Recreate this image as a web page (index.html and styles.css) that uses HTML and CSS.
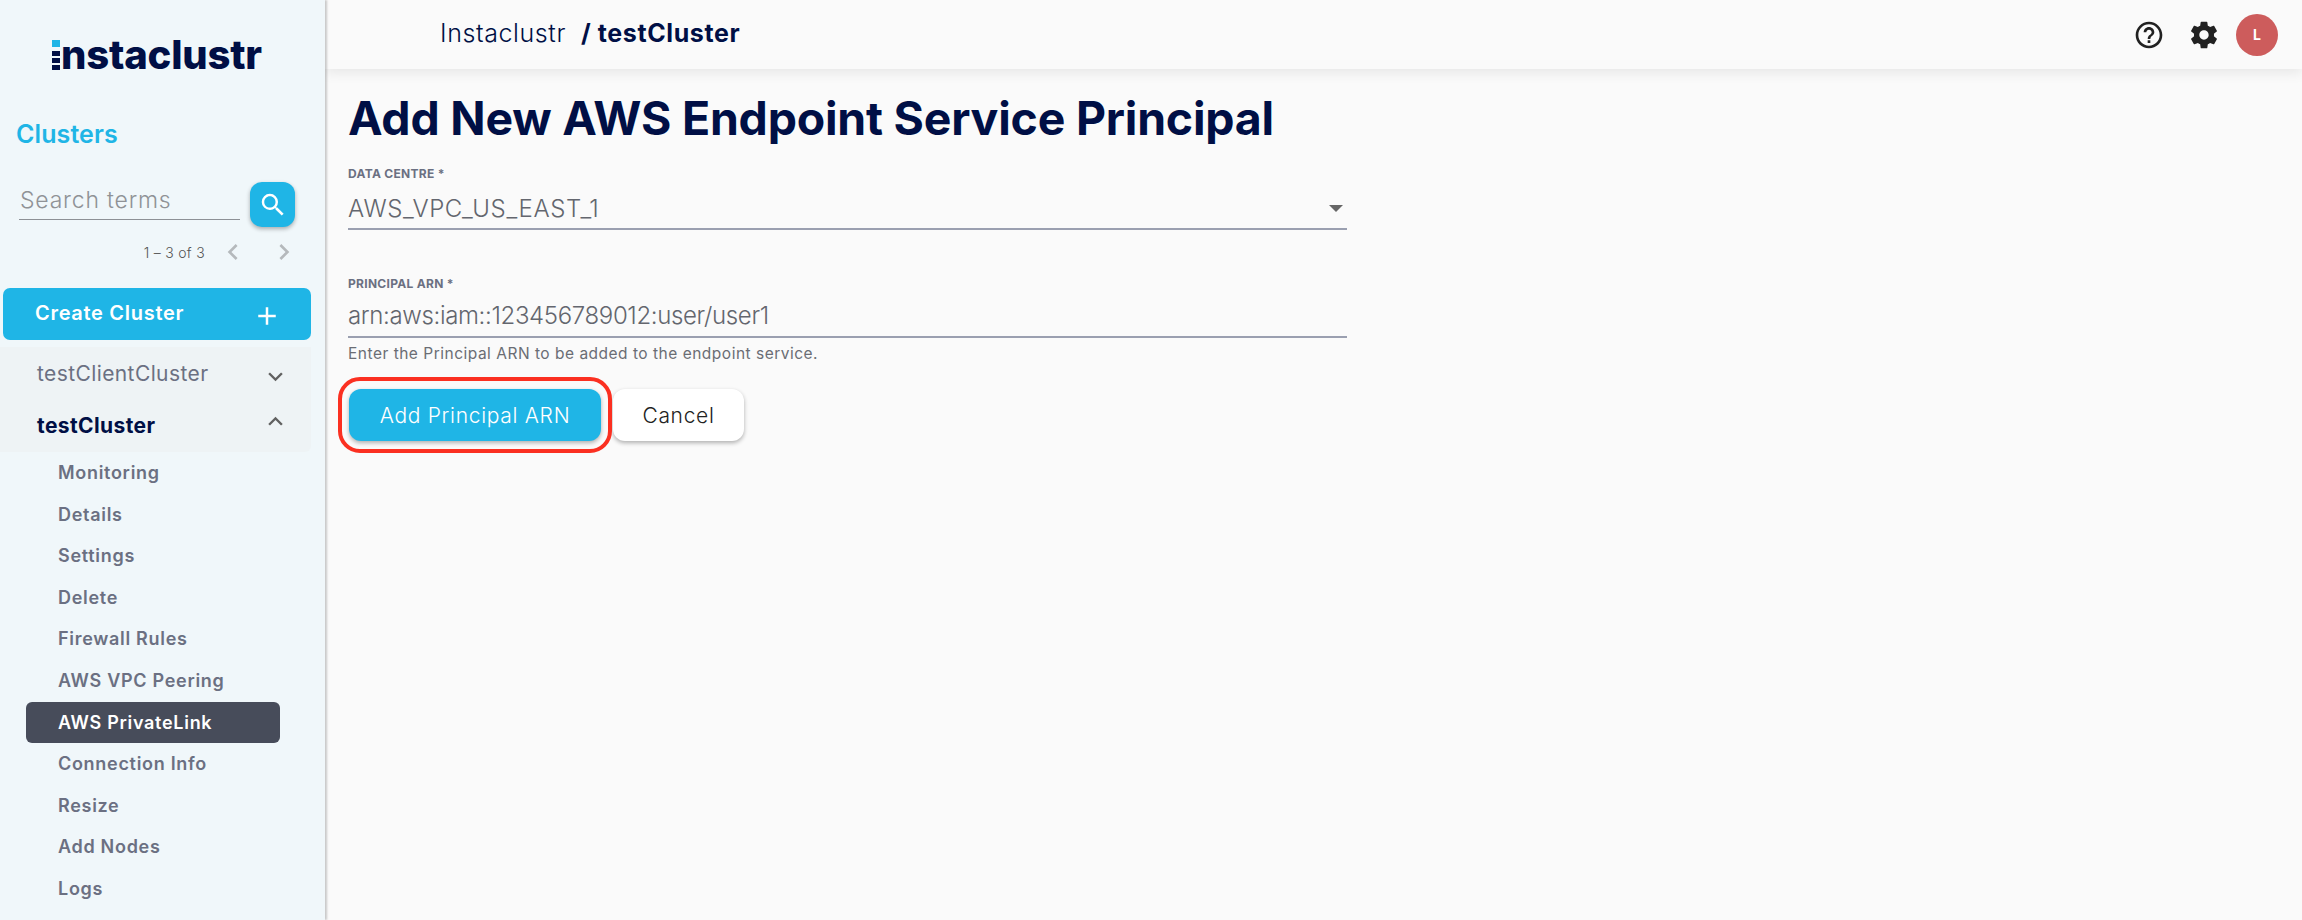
FILE: index.html
```html
<!DOCTYPE html>
<html lang="en">
  <head>
    <meta charset="UTF-8" />
    <title>Add New AWS Endpoint Service Principal</title>
    <link rel="stylesheet" href="styles.css">
  </head>
  <body>
    <div class="sidebar">
      <div class="logo">
        <div class="logo-mark"><span class="blue"></span><span></span><span></span><span></span></div>
        <span class="logo-text">nstaclustr</span>
      </div>
      <h2 class="clusters-title">Clusters</h2>
      <div class="search-row">
        <div class="search-input">Search terms</div>
        <button class="search-btn">
          <svg viewBox="0 0 24 24" width="30" height="30"><path fill="#fff" d="M15.5 14h-.79l-.28-.27A6.471 6.471 0 0 0 16 9.5 6.5 6.5 0 1 0 9.5 16c1.61 0 3.09-.59 4.23-1.57l.27.28v.79l5 4.99L20.49 19l-4.99-5zm-6 0C7.01 14 5 11.99 5 9.5S7.01 5 9.5 5 14 7.01 14 9.5 11.99 14 9.5 14z"/></svg>
        </button>
      </div>
      <div class="pager">
        <span class="pager-text">1 – 3 of 3</span>
        <svg viewBox="0 0 24 24" width="32" height="32"><path fill="#b5b9bc" d="M15.41 7.41 14 6l-6 6 6 6 1.41-1.41L10.83 12z"/></svg>
        <svg viewBox="0 0 24 24" width="32" height="32"><path fill="#b5b9bc" d="M10 6 8.59 7.41 13.17 12l-4.58 4.59L10 18l6-6z"/></svg>
      </div>
      <div class="create-btn">
        <span>Create Cluster</span>
        <svg viewBox="0 0 24 24" width="30" height="30"><path fill="#fff" d="M19 13h-6v6h-2v-6H5v-2h6V5h2v6h6z"/></svg>
      </div>
      <div class="cluster-group">
        <div class="cluster-row">
          <span>testClientCluster</span>
          <svg viewBox="0 0 24 24" width="29" height="29"><path fill="#616161" d="M16.59 8.59 12 13.17 7.41 8.59 6 10l6 6 6-6z"/></svg>
        </div>
        <div class="cluster-row open">
          <span>testCluster</span>
          <svg viewBox="0 0 24 24" width="29" height="29"><path fill="#616161" d="M12 8l-6 6 1.41 1.41L12 10.83l4.59 4.58L18 14z"/></svg>
        </div>
      </div>
      <ul class="nav">
        <li>Monitoring</li>
        <li>Details</li>
        <li>Settings</li>
        <li>Delete</li>
        <li>Firewall Rules</li>
        <li>AWS VPC Peering</li>
        <li class="active">AWS PrivateLink</li>
        <li>Connection Info</li>
        <li>Resize</li>
        <li>Add Nodes</li>
        <li>Logs</li>
      </ul>
    </div>

    <div class="main">
      <div class="topbar">
        <div class="crumbs">
          <span class="crumb-org">Instaclustr</span>
          <span class="crumb-cluster">/ testCluster</span>
        </div>
        <div class="top-icons">
          <svg viewBox="0 0 24 24" width="32" height="32"><path fill="#212121" d="M11 18h2v-2h-2v2zm1-16C6.48 2 2 6.48 2 12s4.48 10 10 10 10-4.48 10-10S17.52 2 12 2zm0 18c-4.41 0-8-3.59-8-8s3.59-8 8-8 8 3.59 8 8-3.59 8-8 8zm0-14c-2.21 0-4 1.79-4 4h2c0-1.1.9-2 2-2s2 .9 2 2c0 2-3 1.75-3 5h2c0-2.25 3-2.5 3-5 0-2.21-1.79-4-4-4z"/></svg>
          <svg viewBox="0 0 24 24" width="32" height="32"><path fill="#212121" d="M19.43 12.98c.04-.32.07-.64.07-.98s-.03-.66-.07-.98l2.11-1.65c.19-.15.24-.42.12-.64l-2-3.46c-.12-.22-.39-.3-.61-.22l-2.49 1c-.52-.4-1.08-.73-1.69-.98l-.38-2.65C14.46 2.18 14.25 2 14 2h-4c-.25 0-.46.18-.49.42l-.38 2.65c-.61.25-1.17.59-1.69.98l-2.49-1c-.23-.09-.49 0-.61.22l-2 3.46c-.13.22-.07.49.12.64l2.11 1.65c-.04.32-.07.65-.07.98s.03.66.07.98l-2.11 1.65c-.19.15-.24.42-.12.64l2 3.46c.12.22.39.3.61.22l2.49-1c.52.4 1.08.73 1.69.98l.38 2.65c.03.24.24.42.49.42h4c.25 0 .46-.18.49-.42l.38-2.65c.61-.25 1.17-.59 1.69-.98l2.49 1c.23.09.49 0 .61-.22l2-3.46c.12-.22.07-.49-.12-.64l-2.11-1.65zM12 15.5c-1.93 0-3.5-1.57-3.5-3.5s1.57-3.5 3.5-3.5 3.5 1.57 3.5 3.5-1.57 3.5-3.5 3.5z"/></svg>
          <div class="avatar">L</div>
        </div>
      </div>

      <div class="content">
        <h1>Add New AWS Endpoint Service Principal</h1>

        <div class="field first-field">
          <label>DATA CENTRE *</label>
          <div class="value select-value">
            <span>AWS_VPC_US_EAST_1</span>
            <span class="arrow"></span>
          </div>
        </div>

        <div class="field second-field">
          <label>PRINCIPAL ARN *</label>
          <div class="value arn-value">arn:aws:iam::123456789012:user/user1</div>
          <p class="helper">Enter the Principal ARN to be added to the endpoint service.</p>
        </div>

        <div class="actions">
          <button class="btn btn-primary">Add Principal ARN</button>
          <button class="btn btn-cancel">Cancel</button>
          <div class="highlight"></div>
        </div>
      </div>
    </div>
  </body>
</html>
```

FILE: styles.css
```css
* {
  box-sizing: border-box;
}
body {
  font-family: "Inter", "Open Sans", sans-serif;
  margin: 0;
  height: 920px;
  overflow: hidden;
  display: flex;
  background-color: #fafafa;
}
svg {
  display: block;
  flex-shrink: 0;
}

/* sidebar */
.sidebar {
  width: 325px;
  height: 920px;
  overflow: hidden;
  flex-shrink: 0;
  background-color: #f0f7fa;
  box-shadow: 2px 0 2px rgba(0, 0, 0, 0.2);
  position: relative;
  z-index: 2;
}
.logo {
  display: flex;
  align-items: flex-end;
  height: 32px;
  margin: 39px 0 0 52px;
  gap: 1px;
}
.logo-mark {
  display: flex;
  flex-direction: column;
  gap: 2px;
  width: 8px;
  height: 31px;
}
.logo-mark span {
  background-color: #000f45;
  height: 5px;
}
.logo-mark span.blue {
  background-color: #1fb5e6;
  height: 7px;
  margin-bottom: 2px;
}
.logo-text {
  font-size: 40px;
  font-weight: 800;
  line-height: 32px;
  letter-spacing: -0.2px;
  color: #000f45;
}
.clusters-title {
  margin: 48px 0 0 16px;
  font-size: 25px;
  line-height: 30px;
  font-weight: 600;
  letter-spacing: 0.1px;
  color: #1fb5e6;
}
.search-row {
  display: flex;
  align-items: flex-start;
  margin: 33px 0 0 19px;
}
.search-input {
  width: 221px;
  height: 38px;
  padding: 2px 1px 0;
  font-size: 23px;
  line-height: 32px;
  font-weight: 300;
  letter-spacing: 0.8px;
  color: #8f9296;
  border-bottom: 1px solid #8d9196;
}
.search-btn {
  width: 45px;
  height: 45px;
  margin-left: 10px;
  padding: 0;
  display: flex;
  align-items: center;
  justify-content: center;
  background-color: #1fb5e6;
  border: none;
  border-radius: 12px;
  box-shadow: 0 2px 4px rgba(0, 0, 0, 0.3);
}
.pager {
  display: flex;
  align-items: center;
  justify-content: flex-end;
  gap: 19px;
  height: 28px;
  margin: 11px 25px 0 0;
}
.pager-text {
  font-size: 14px;
  font-weight: 300;
  letter-spacing: 0.3px;
  color: #555;
  margin-right: -7px;
}
.create-btn {
  display: flex;
  align-items: center;
  justify-content: space-between;
  width: 308px;
  height: 52px;
  margin: 22px 0 0 3px;
  padding: 0 29px 0 32px;
  background-color: #1fb5e6;
  border-radius: 7px;
  font-size: 20px;
  font-weight: 600;
  letter-spacing: 0.7px;
  color: #fff;
}
.create-btn span {
  margin-bottom: 2px;
}
.create-btn svg {
  margin-top: 3px;
}
.cluster-group {
  width: 311px;
  height: 105px;
  margin-top: 7px;
  background-color: #eef3f5;
  border-radius: 0 0 6px 0;
}
.cluster-row {
  display: flex;
  align-items: center;
  justify-content: space-between;
  height: 52px;
  padding: 0 21px 0 37px;
  font-size: 21px;
  font-weight: 400;
  letter-spacing: 0.4px;
  color: #6b7082;
}
.cluster-row svg {
  margin-top: 6px;
}
.cluster-row.open {
  font-weight: 700;
  color: #000f45;
}
.cluster-row.open svg {
  margin-top: -8px;
}
.nav {
  list-style: none;
  margin: 0 0 0 26px;
  padding: 0;
  width: 254px;
}
.nav li {
  height: 41.6px;
  padding-left: 32px;
  font-size: 18px;
  line-height: 41.6px;
  font-weight: 600;
  letter-spacing: 0.7px;
  color: #6b7082;
}
.nav li.active {
  background-color: #474c5a;
  border-radius: 6px;
  color: #fff;
}

/* main area */
.main {
  flex: 1;
  min-width: 0;
}
.topbar {
  display: flex;
  align-items: center;
  justify-content: space-between;
  height: 69px;
  padding: 0 24px 0 115px;
  background-color: #fafafa;
  box-shadow: 0 4px 12px rgba(0, 0, 0, 0.08);
}
.crumbs {
  display: flex;
  gap: 15px;
  margin-bottom: 3px;
  font-size: 25px;
  color: #000f45;
  letter-spacing: 0.6px;
}
.crumb-org {
  font-weight: 300;
}
.crumb-cluster {
  font-weight: 700;
}
.top-icons {
  display: flex;
  align-items: center;
  gap: 23px;
}
.avatar {
  width: 42px;
  height: 42px;
  margin-left: -7px;
  border-radius: 50%;
  background-color: #cd5c5c;
  color: #fff;
  font-size: 14px;
  font-weight: 700;
  line-height: 42px;
  text-align: center;
}
.content {
  padding: 0 0 0 23px;
}
h1 {
  margin: 20px 0 0;
  font-size: 46.4px;
  line-height: 58px;
  font-weight: 700;
  letter-spacing: -0.2px;
  color: #000f45;
  white-space: nowrap;
}
.field {
  width: 999px;
}
.first-field {
  margin-top: 20px;
}
.second-field {
  margin-top: 47px;
}
.field label {
  display: block;
  font-size: 12px;
  line-height: 14px;
  font-weight: 700;
  letter-spacing: 0.3px;
  color: #6b7082;
}
.value {
  height: 44px;
  margin-top: 5px;
  padding-top: 3px;
  font-size: 24px;
  line-height: 32px;
  font-weight: 300;
  letter-spacing: 0.6px;
  color: #63666e;
  border-bottom: 2px solid #9a9fb0;
}
.arn-value {
  height: 42px;
  padding-top: 4px;
  letter-spacing: -0.36px;
}
.select-value {
  display: flex;
  align-items: center;
  justify-content: space-between;
  padding-right: 4px;
}
.arrow {
  width: 0;
  height: 0;
  border-left: 7px solid transparent;
  border-right: 7px solid transparent;
  border-top: 7px solid #666;
}
.helper {
  margin: 6px 0 0;
  font-size: 15.5px;
  line-height: 20px;
  font-weight: 400;
  letter-spacing: 0.5px;
  color: #6a6d74;
}
.actions {
  display: flex;
  gap: 12px;
  margin-top: 25px;
  position: relative;
}
.btn {
  height: 52px;
  padding: 0;
  font-family: inherit;
  font-size: 21px;
  font-weight: 300;
  letter-spacing: 0.7px;
  border: none;
  border-radius: 12px;
  box-shadow: 0 2px 4px rgba(0, 0, 0, 0.3);
}
.btn-primary {
  width: 252px;
  margin-left: 1px;
  background-color: #1fb5e6;
  color: #fff;
}
.btn-cancel {
  width: 131px;
  background-color: #fff;
  color: #222;
}
.highlight {
  position: absolute;
  left: -10px;
  top: -12px;
  width: 274px;
  height: 76px;
  border: 4px solid #fb3021;
  border-radius: 22px;
}
```
